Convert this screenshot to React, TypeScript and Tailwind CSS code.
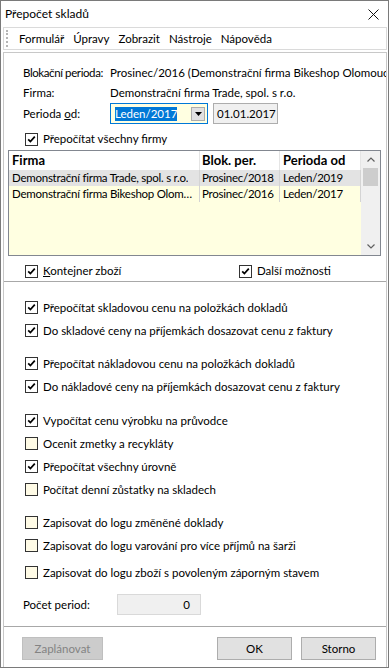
import React from 'react';

const Check: React.FC<{ checked: boolean }> = ({ checked }) => (
  <span
    className={`w-[13px] h-[13px] shrink-0 border border-[#333333] flex items-center justify-center ${
      checked ? 'bg-white' : 'bg-[#fffbe6]'
    }`}
  >
    {checked && (
      <svg width="9" height="9" viewBox="0 0 9 9">
        <path d="M1.2 4.3 L3.4 6.6 L7.8 1.6" stroke="#000" strokeWidth="1.7" fill="none" />
      </svg>
    )}
  </span>
);

const CheckRow: React.FC<{ checked: boolean; label: React.ReactNode; className?: string }> = ({
  checked,
  label,
  className = '',
}) => (
  <div className={`flex items-center h-[23px] pl-[21px] ${className}`}>
    <Check checked={checked} />
    <span className="ml-[5px] whitespace-nowrap">{label}</span>
  </div>
);

const rows = [
  { firma: 'Demonstrační firma Trade, spol. s r.o.', blok: 'Prosinec/2018', od: 'Leden/2019', selected: true },
  { firma: 'Demonstrační firma Bikeshop Olomouc, s.r.o.', blok: 'Prosinec/2016', od: 'Leden/2017', selected: false },
];

const App: React.FC = () => {
  return (
    <div className="w-[389px] h-[668px] border border-[#7a7a7a] bg-white flex flex-col text-[11.5px] text-black font-['Lato',sans-serif] overflow-hidden">
      {/* title bar */}
      <div className="h-[26px] flex items-center justify-between pl-[4px] pr-[9px] shrink-0">
        <span className="text-[12px]">Přepočet skladů</span>
        <svg width="11" height="11" viewBox="0 0 11 11">
          <path d="M0.5 0.5 L10.5 10.5 M10.5 0.5 L0.5 10.5" stroke="#111" strokeWidth="1" />
        </svg>
      </div>

      {/* menu */}
      <div className="ml-[2px] mr-[1px] h-[23px] border border-[#dadada] flex items-center shrink-0">
        <div className="ml-[2px] w-[2px] h-[17px] border-l-2 border-dotted border-[#b5b5b5]" />
        <div className="flex items-center ml-[11px] gap-[9px]">
          <span>Formulář</span>
          <span>Úpravy</span>
          <span>Zobrazit</span>
          <span>Nástroje</span>
          <span>Nápověda</span>
        </div>
      </div>

      {/* main frame */}
      <div className="ml-[2px] mr-[1px] mt-[2px] flex-1 border-x border-t border-[#c8c8c8] flex flex-col">
        {/* upper */}
        <div className="pt-[10px] border-b border-[#a8a8a8]">
          <div className="flex items-center h-[20px] pl-[19px] whitespace-nowrap overflow-hidden">
            <span className="w-[87px] shrink-0 tracking-[-0.4px]">Blokační perioda:</span>
            <span>Prosinec/2016 (Demonstrační firma Bikeshop Olomouc, spol. s r.o.)</span>
          </div>
          <div className="flex items-center h-[20px] pl-[19px] whitespace-nowrap">
            <span className="w-[87px] shrink-0">Firma:</span>
            <span>Demonstrační firma Trade, spol. s r.o.</span>
          </div>
          <div className="flex items-center h-[21px] pl-[19px]">
            <span className="w-[87px] shrink-0">
              Perioda <span className="underline">o</span>d:
            </span>
            <div className="w-[98px] h-[21px] border border-[#0078d7] bg-[#ffffe1] flex items-center pl-[4px] pr-[2px]">
              <span className="bg-[#0078d7] text-white leading-[14px] h-[14px]">Leden/2017</span>
              <div className="ml-auto w-[14px] h-[14px] bg-[#e1e1e1] border border-[#adadad] flex items-center justify-center">
                <svg width="7" height="4" viewBox="0 0 7 4">
                  <path d="M0 0 L7 0 L3.5 4 Z" fill="#000" />
                </svg>
              </div>
            </div>
            <div className="ml-[5px] w-[65px] h-[21px] bg-[#f0f0f0] border border-[#adadad] flex items-center pl-[3px]">
              01.01.2017
            </div>
          </div>
          <CheckRow checked label="Přepočítat všechny firmy" className="mt-[6px] !h-[18px]" />

          {/* table */}
          <div className="ml-[4px] mt-[2px] w-[373px] h-[106px] border border-[#828790] flex">
            <div className="w-[352px] flex flex-col bg-[#ffffe1]">
              <div className="flex h-[19px] bg-white font-bold text-[13px] shrink-0">
                <div className="w-[191px] border-r border-[#e5e5e5] pl-[3px] flex items-center">Firma</div>
                <div className="w-[80px] border-r border-[#e5e5e5] pl-[2px] flex items-center">Blok. per.</div>
                <div className="w-[81px] border-r border-[#e5e5e5] pl-[3px] flex items-center">Perioda od</div>
              </div>
              {rows.map((r, i) => (
                <div key={i} className={`flex h-[16px] tracking-[-0.25px] ${r.selected ? 'bg-[#e3e3e3]' : ''}`}>
                  <div className="w-[191px] border-r border-[#d4d4d4] pl-[3px] pr-[2px] flex items-center overflow-hidden whitespace-nowrap">
                    <span className="truncate">{r.firma}</span>
                  </div>
                  <div className="w-[80px] border-r border-[#d4d4d4] pl-[2px] flex items-center whitespace-nowrap overflow-hidden">{r.blok}</div>
                  <div className="w-[81px] border-r border-[#d4d4d4] pl-[3px] flex items-center whitespace-nowrap">{r.od}</div>
                </div>
              ))}
            </div>
            <div className="flex-1 bg-[#f0f0f0] flex flex-col items-center">
              <div className="h-[17px] flex items-center justify-center">
                <svg width="8" height="5" viewBox="0 0 8 5">
                  <path d="M0.5 4.5 L4 1 L7.5 4.5" stroke="#606060" strokeWidth="1.2" fill="none" />
                </svg>
              </div>
              <div className="w-[15px] h-[18px] bg-[#cdcdcd]" />
              <div className="mt-auto h-[17px] flex items-center justify-center">
                <svg width="8" height="5" viewBox="0 0 8 5">
                  <path d="M0.5 0.5 L4 4 L7.5 0.5" stroke="#606060" strokeWidth="1.2" fill="none" />
                </svg>
              </div>
            </div>
          </div>

          <div className="flex items-center mt-[5px] h-[20px] pl-[21px]">
            <div className="w-[214px] flex items-center">
              <Check checked />
              <span className="ml-[5px]">
                <span className="underline">K</span>ontejner zboží
              </span>
            </div>
            <Check checked />
            <span className="ml-[5px]">Další možnosti</span>
          </div>
        </div>

        {/* lower */}
        <div className="pt-[14px] pb-[11px] border-b border-[#a8a8a8]">
          <CheckRow checked label="Přepočítat skladovou cenu na položkách dokladů" />
          <CheckRow checked label="Do skladové ceny na příjemkách dosazovat cenu z faktury" />
          <CheckRow checked label="Přepočítat nákladovou cenu na položkách dokladů" className="mt-[10px]" />
          <CheckRow checked label="Do nákladové ceny na příjemkách dosazovat cenu z faktury" />
          <CheckRow checked label="Vypočítat cenu výrobku na průvodce" className="mt-[11px]" />
          <CheckRow checked={false} label="Ocenit zmetky a recykláty" />
          <CheckRow checked label="Přepočítat všechny úrovně" />
          <CheckRow checked={false} label="Počítat denní zůstatky na skladech" />
          <CheckRow checked={false} label="Zapisovat do logu změněné doklady" className="mt-[10px]" />
          <CheckRow checked={false} label="Zapisovat do logu varování pro více příjmů na šarži" />
          <CheckRow checked={false} label="Zapisovat do logu zboží s povoleným záporným stavem" className="mt-[4px]" />
          <div className="flex items-center mt-[10px] h-[21px] pl-[19px]">
            <span className="w-[94px] shrink-0">Počet period:</span>
            <div className="w-[84px] h-[21px] bg-[#f0f0f0] border border-[#d9d9d9] flex items-center justify-end pr-[10px]">
              0
            </div>
          </div>
        </div>

        {/* buttons */}
        <div className="flex items-start pt-[10px] pl-[18px] pr-[10px]">
          <button className="w-[81px] h-[23px] bg-[#cccccc] border border-[#bfbfbf] text-[#838383]">Zaplánovat</button>
          <button className="ml-auto w-[75px] h-[23px] bg-[#e1e1e1] border border-[#adadad]">OK</button>
          <button className="ml-[9px] w-[75px] h-[23px] bg-[#e1e1e1] border border-[#adadad]">Storno</button>
        </div>
      </div>
    </div>
  );
};

export default App;
